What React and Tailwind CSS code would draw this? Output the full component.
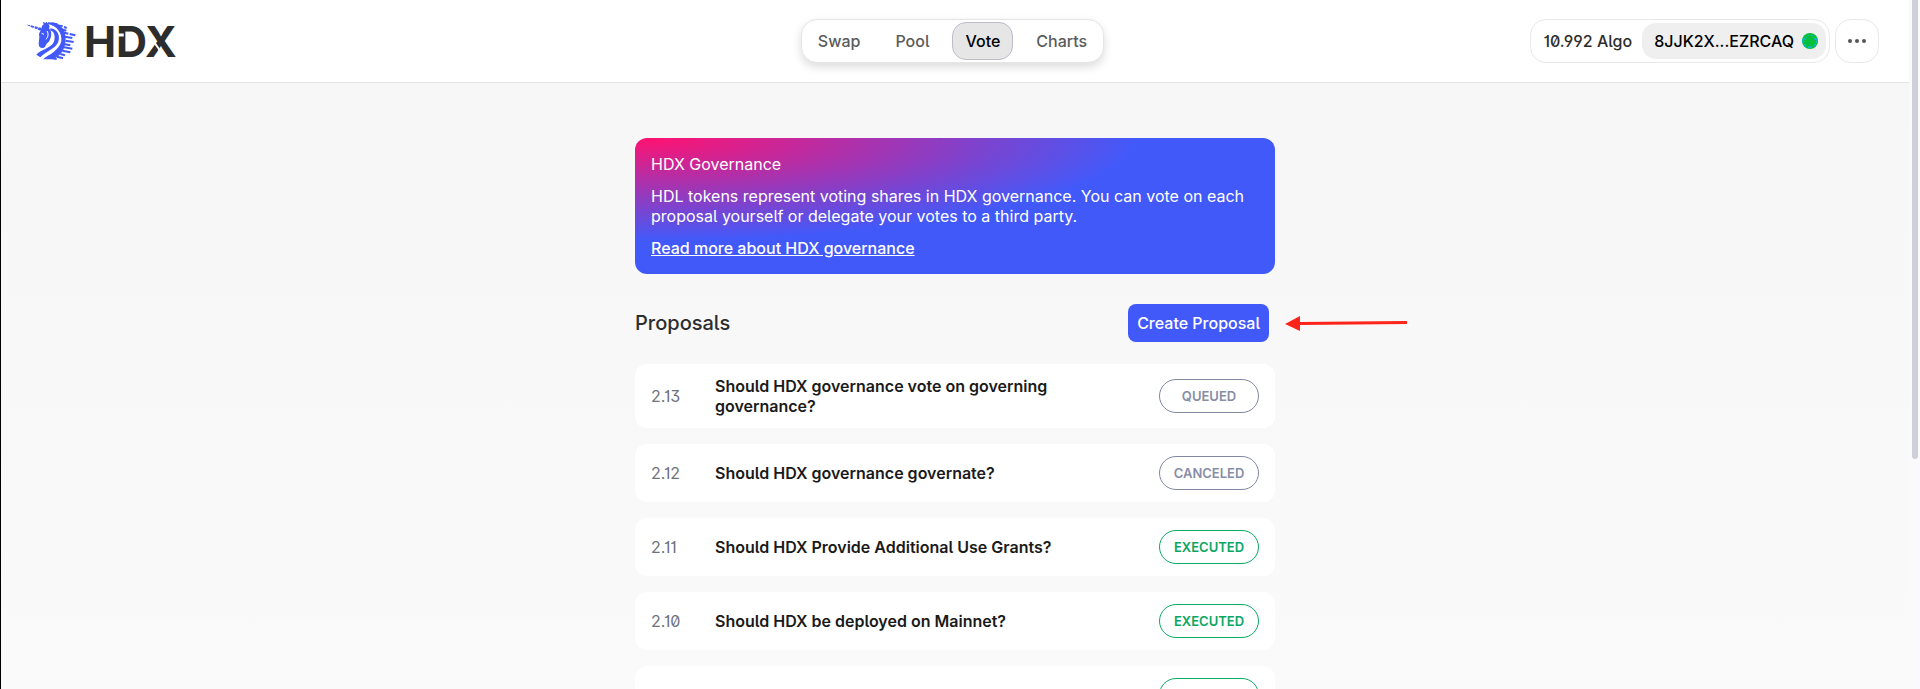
import React from "react";

const proposals = [
  { id: "2.13", title: "Should HDX governance vote on governing governance?", status: "QUEUED" },
  { id: "2.12", title: "Should HDX governance governate?", status: "CANCELED" },
  { id: "2.11", title: "Should HDX Provide Additional Use Grants?", status: "EXECUTED" },
  { id: "2.10", title: "Should HDX be deployed on Mainnet?", status: "EXECUTED" },
  { id: "", title: "", status: "" },
];

const navItems = ["Swap", "Pool", "Vote", "Charts"];

const statusStyles = {
  QUEUED: "border-[#8088a4] text-[#888da6]",
  CANCELED: "border-[#8088a4] text-[#888da6]",
  EXECUTED: "border-[#0aab63] text-[#0aa662]",
};

function Unicorn() {
  return (
    <svg width="50" height="40" viewBox="77 64 150 120" fill="#4259f9">
      {/* horn */}
      <path d="M78 75l12 1-2 4zM92 77l10 3-3 5-9-4zM104 80l9 2-2 7-9-3zM115 83l9 2-3 8-9-3z" />
      {/* head */}
      <path d="M127 66l8 4 3-4 6 6 4 8-2 6c8 8 8 18 5 28l-5 12c-5 3-8 7-10 12-3 7-12 10-18 4-4-5-3-12-2-18l1-11-1-11 6-12 3-11 5-5z" />
      {/* neck */}
      <path d="M150 86C172 88 180 108 174 126C166 148 135 155 120 173L108 165C122 148 152 146 161 126C166 110 162 96 150 92Z" />
      <path d="M143 68C175 68 196 85 196 118C196 150 178 172 155 179L128 179C145 165 175 155 183 125C186 100 170 78 143 73Z" />
      {/* mane */}
      <path
        stroke="#4259f9"
        strokeWidth="6"
        fill="none"
        d="M154 71l17 3M168 77l19 3M191 82l8 3M180 88l18 5M186 98l18 4M208 103l17 4M194 111l22 4M196 123l24 4M194 134l16 3M191 143l25 4M186 153l24 5M180 163l14 4M170 171l18 5M155 176l14 2"
      />
      {/* eye and cheek */}
      <path stroke="#ffffff" strokeWidth="3" fill="none" d="M124 101l7 3M140 94c5 8 4 16-3 25" />
    </svg>
  );
}

function Logo() {
  return (
    <a href="#" className="flex items-center gap-2">
      <Unicorn />
      <span className="relative text-[43px] leading-10 font-bold text-[#2d2d2d]">
        HDX
        {/* stencil gaps */}
        <svg
          className="absolute inset-0 size-full"
          viewBox="0 0 91 40"
          preserveAspectRatio="none"
          stroke="#ffffff"
          fill="none">
          <path strokeWidth="3" d="M33 14h6" />
          <path strokeWidth="2" d="M64 14l15 22" />
        </svg>
      </span>
    </a>
  );
}

function Header() {
  return (
    <header className="grid grid-cols-[1fr_auto_1fr] items-center h-[83px] pl-[25px] pr-[30px] bg-white border-b border-[#e3e3e3]">
      <Logo />
      <nav className="flex items-center gap-[11px] h-11 px-1 rounded-2xl bg-white border border-[#e5e5e5] shadow-[0_4px_10px_rgba(0,0,0,0.14)]">
        {navItems.map((item) => (
          <a
            key={item}
            href="#"
            className={
              item === "Vote"
                ? "px-3 py-2 rounded-[14px] border border-[#bcbccb] bg-[#e6e6e6] text-black font-medium leading-5"
                : "px-3 py-2 text-[#5b5b5b] font-medium leading-5"
            }>
            {item}
          </a>
        ))}
      </nav>
      <div className="flex items-center justify-end gap-[5px]">
        <div className="flex items-center h-11 pl-3 pr-[3px] gap-[10px] rounded-2xl border border-[#e8e8e8] bg-white">
          <span className="font-medium text-[#2d2d2d]">10.992 Algo</span>
          <button className="flex items-center gap-2 h-9 pl-3 pr-2 rounded-[14px] bg-[#efefef] text-black font-medium">
            8JJK2X...EZRCAQ
            <svg width="16" height="16" viewBox="0 0 16 16">
              <circle cx="8" cy="8" r="8" fill="#05c03a" />
              <path
                fill="#12b8b0"
                d="M1 5h3v2H2v3H0V7zM12 5h3l1 2v3h-2V7h-2zM5 2h2v1H5zM9 2h2v1H9zM2 11h2v3H2zM12 11h2v3h-2zM6 13h4v2H6zM4 4h1v1H4zM11 4h1v1h-1z"
              />
            </svg>
          </button>
        </div>
        <button
          aria-label="More"
          className="flex items-center justify-center size-11 rounded-2xl border border-[#e8e8e8] bg-white">
          <svg width="20" height="6" viewBox="0 0 20 6" fill="#555555">
            <circle cx="3" cy="3" r="2" />
            <circle cx="10" cy="3" r="2" />
            <circle cx="17" cy="3" r="2" />
          </svg>
        </button>
      </div>
    </header>
  );
}

function GovernanceCard() {
  return (
    <section className="flex flex-col items-start gap-3 p-4 rounded-xl leading-5 text-white bg-[radial-gradient(76%_75%_at_2%_0%,#ff1270_0%,#4259f9_100%)]">
      <h2>HDX Governance</h2>
      <p>
        HDL tokens represent voting shares in HDX governance. You can vote on each
        proposal yourself or delegate your votes to a third party.
      </p>
      <a href="#" className="underline font-medium">
        Read more about HDX governance
      </a>
    </section>
  );
}

function Proposal({ id, title, status }) {
  return (
    <li className="flex items-center px-4 py-3 rounded-xl bg-white leading-5">
      <span className="w-16 shrink-0 text-[#6e727d]">{id}</span>
      <a href="#" className="max-w-[400px] font-semibold text-[#1a1a1a]">
        {title}
      </a>
      <span
        className={`flex items-center justify-center shrink-0 w-[100px] h-[34px] ml-auto rounded-full border text-[13px] font-semibold ${statusStyles[status] || "border-[#0aab63]"}`}>
        {status}
      </span>
    </li>
  );
}

export default function App() {
  return (
    <div className="flex h-screen overflow-hidden border-l border-black bg-linear-to-b from-[#f6f6f6] to-[#fafafa] font-['Inter',sans-serif] text-base [font-feature-settings:'ss01','ss02','cv01','cv03']">
      <div className="flex-1">
        <Header />
        <main className="w-full max-w-[640px] mx-auto pt-[55px]">
          <GovernanceCard />
          <div className="relative flex items-center justify-between mt-[30px] mb-[22px] pr-[6px]">
            <h1 className="text-xl font-medium text-[#2d2d2d]">Proposals</h1>
            <button className="h-[38px] px-[9px] rounded-lg bg-[#4259f9] text-white font-medium">
              Create Proposal
            </button>
            <svg
              className="absolute left-full ml-[10px]"
              width="122"
              height="16"
              viewBox="0 0 122 16"
              fill="#ff2419">
              <path d="M0 9L15 1v6L122 6v3L15 10v6z" />
            </svg>
          </div>
          <ul className="flex flex-col gap-4">
            {proposals.map((proposal) => (
              <Proposal key={proposal.id} {...proposal} />
            ))}
          </ul>
        </main>
      </div>

      {/* scrollbar */}
      <div className="w-[11px] pl-[3px] pr-[2px] bg-[#fafafc]">
        <div className="h-2/3 rounded-b-full bg-[#cfcfd7]" />
      </div>
    </div>
  );
}
